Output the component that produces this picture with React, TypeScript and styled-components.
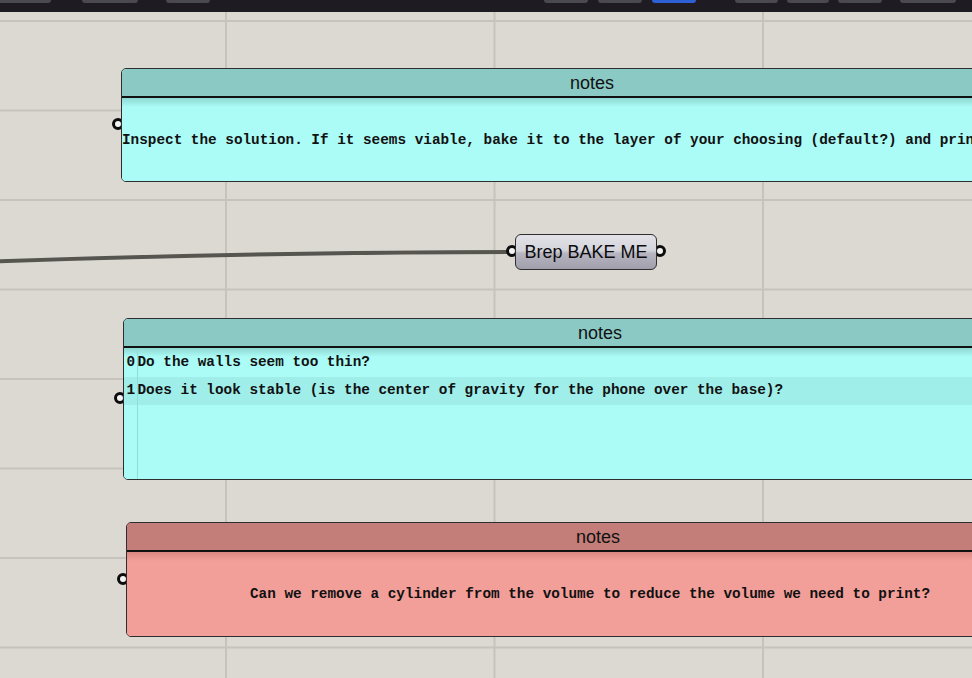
import React from 'react'
import styled, { createGlobalStyle } from 'styled-components'

const GlobalStyle = createGlobalStyle`
  html, body {
    margin: 0;
    padding: 0;
    background: #dcd9d3;
    overflow: hidden;
  }
  #root {
    width: 972px;
    height: 678px;
  }
`

const colors = {
  bar: '#1e1c22',
  barButton: '#4b4950',
  barActive: '#2d5fd5',
  canvas: '#dcd9d3',
  grid: '#c6c2bc',
  wire: '#575550',
  outline: '#2e2e30',
}

const palettes = {
  cyan: { head: '#8bc9c5', body: '#abfbf6', shade: '#8ed8d3', stripe: '#9feeea', rule: '#90dcd7' },
  red: { head: '#c47e7a', body: '#f29f99', shade: '#d9877f', stripe: '#e8958f', rule: '#d8908a' },
}

type Tone = keyof typeof palettes

const Screen = styled.div`
  display: flex;
  flex-direction: column;
  width: 972px;
  height: 678px;
  overflow: hidden;
`

const TopBar = styled.div`
  display: flex;
  align-items: flex-start;
  height: 12px;
  flex: 0 0 12px;
  background: ${colors.bar};
`

const BarGroup = styled.div<{ $offset: number }>`
  display: flex;
  margin-left: ${({ $offset }) => $offset}px;
`

const BarButton = styled.div<{ $w: number; $gap?: number; $active?: boolean }>`
  width: ${({ $w }) => $w}px;
  height: 3px;
  margin-right: ${({ $gap }) => $gap ?? 0}px;
  border-radius: 0 0 6px 6px;
  background: ${({ $active }) => ($active ? colors.barActive : colors.barButton)};
`

const Canvas = styled.div`
  position: relative;
  flex: 1;
  overflow: hidden;
  background-color: ${colors.canvas};
  background-image:
    linear-gradient(to right, ${colors.grid} 2px, transparent 2px),
    linear-gradient(to bottom, ${colors.grid} 2px, transparent 2px);
  background-size: 268.5px 89.5px;
  background-position: 225px 8px;
`

const Wires = styled.svg`
  position: absolute;
  inset: 0;
  width: 100%;
  height: 100%;
  pointer-events: none;
`

const Node = styled.div<{ $x: number; $y: number }>`
  position: absolute;
  left: ${({ $x }) => $x}px;
  top: ${({ $y }) => $y}px;
`

const Grip = styled.span<{ $side: 'left' | 'right' }>`
  position: absolute;
  top: 50%;
  ${({ $side }) => ($side === 'left' ? 'left: -9px;' : 'right: -9px;')}
  width: 6px;
  height: 6px;
  margin-top: -7px;
  border: 3.5px solid #0c0c0c;
  border-radius: 50%;
  background: #f4f4f4;
  z-index: 0;
`

const Panel = styled.div<{ $w: number; $h: number }>`
  position: relative;
  width: ${({ $w }) => $w}px;
  height: ${({ $h }) => $h}px;
`

const PanelFrame = styled.div<{ $tone: Tone }>`
  position: relative;
  z-index: 1;
  display: flex;
  flex-direction: column;
  height: 100%;
  box-sizing: border-box;
  border: 1.5px solid ${colors.outline};
  border-radius: 5px;
  overflow: hidden;
  background: ${({ $tone }) => palettes[$tone].body};
`

const PanelHead = styled.div<{ $tone: Tone }>`
  flex: 0 0 27px;
  display: flex;
  align-items: center;
  justify-content: center;
  background: ${({ $tone }) => palettes[$tone].head};
  border-bottom: 2px solid #111;
  font-family: 'Liberation Sans', Arial, sans-serif;
  font-size: 18px;
  color: #111;
  line-height: 1;
`

const PanelBody = styled.div<{ $tone: Tone; $center?: boolean }>`
  flex: 1;
  display: flex;
  flex-direction: column;
  justify-content: ${({ $center }) => ($center ? 'center' : 'flex-start')};
  align-items: ${({ $center }) => ($center ? 'center' : 'stretch')};
  background: linear-gradient(
    to bottom,
    ${({ $tone }) => palettes[$tone].shade} 0px,
    ${({ $tone }) => palettes[$tone].body} 9px
  );
  font-family: 'Liberation Mono', 'Courier New', monospace;
  font-weight: bold;
  font-size: 14.35px;
  color: #111;
  white-space: nowrap;
`

const NoteText = styled.div<{ $align: 'left' | 'center' }>`
  width: 100%;
  text-align: ${({ $align }) => $align};
  ${({ $align }) => ($align === 'center' ? 'padding-right: 16px; box-sizing: border-box;' : '')}
`

const ListBody = styled.div<{ $tone: Tone }>`
  position: relative;
  flex: 1;
  display: flex;
  flex-direction: column;
  background: linear-gradient(
    to bottom,
    ${({ $tone }) => palettes[$tone].shade} 0px,
    ${({ $tone }) => palettes[$tone].body} 9px
  );
  font-family: 'Liberation Mono', 'Courier New', monospace;
  font-weight: bold;
  font-size: 14.35px;
  color: #111;
  white-space: nowrap;

  &::before {
    content: '';
    position: absolute;
    left: 12.5px;
    top: 0;
    bottom: 0;
    width: 1px;
    background: ${({ $tone }) => palettes[$tone].rule};
  }
`

const ListRow = styled.div<{ $tone: Tone; $odd: boolean }>`
  display: flex;
  align-items: center;
  height: 28.5px;
  padding-bottom: 1px;
  box-sizing: border-box;
  background: ${({ $tone, $odd }) => ($odd ? palettes[$tone].stripe : 'transparent')};
`

const RowIndex = styled.span`
  width: 13.5px;
  padding-left: 2.5px;
  box-sizing: border-box;
  flex: 0 0 13.5px;
`

const Param = styled.div`
  position: relative;
  width: 142px;
  height: 36px;
`

const ParamBox = styled.div`
  position: relative;
  z-index: 1;
  display: flex;
  align-items: center;
  justify-content: center;
  height: 100%;
  box-sizing: border-box;
  padding-top: 1px;
  border: 1.5px solid ${colors.outline};
  border-radius: 6px;
  background: linear-gradient(
    to bottom,
    #e2e2e8 0%,
    #d4d4db 45%,
    #b5b4bf 55%,
    #a09fab 100%
  );
  font-family: 'Liberation Sans', Arial, sans-serif;
  font-size: 18px;
  color: #0c0c0c;
`

const Note = ({
  x,
  y,
  w,
  h,
  tone,
  children,
}: {
  x: number
  y: number
  w: number
  h: number
  tone: Tone
  children: React.ReactNode
}) => (
  <Node $x={x} $y={y}>
    <Panel $w={w} $h={h}>
      <Grip $side="left" />
      <PanelFrame $tone={tone}>
        <PanelHead $tone={tone}>notes</PanelHead>
        {children}
      </PanelFrame>
    </Panel>
  </Node>
)

const questions = [
  'Do the walls seem too thin?',
  'Does it look stable (is the center of gravity for the phone over the base)?',
]

const App = () => {
  return (
    <Screen>
      <GlobalStyle />
      <TopBar>
        <BarGroup $offset={-4}>
          <BarButton $w={55} $gap={31} />
          <BarButton $w={56} $gap={28} />
          <BarButton $w={44} />
        </BarGroup>
        <BarGroup $offset={334}>
          <BarButton $w={44} $gap={10} />
          <BarButton $w={44} $gap={10} />
          <BarButton $w={44} $active />
        </BarGroup>
        <BarGroup $offset={39}>
          <BarButton $w={43} $gap={9} />
          <BarButton $w={42} $gap={9} />
          <BarButton $w={44} />
        </BarGroup>
        <BarGroup $offset={18}>
          <BarButton $w={56} />
        </BarGroup>
      </TopBar>

      <Canvas>
        <Wires viewBox="0 0 972 666">
          <path
            d="M -10 249.5 C 160 244, 340 240, 512 240"
            fill="none"
            stroke={colors.wire}
            strokeWidth={4}
          />
        </Wires>

        <Note x={121} y={56} w={942} h={114} tone="cyan">
          <PanelBody $tone="cyan" $center>
            <NoteText $align="left">
              Inspect the solution. If it seems viable, bake it to the layer of your choosing (default?) and print it.
            </NoteText>
          </PanelBody>
        </Note>

        <Node $x={515} $y={222}>
          <Param>
            <Grip $side="left" />
            <Grip $side="right" />
            <ParamBox>Brep BAKE ME</ParamBox>
          </Param>
        </Node>

        <Note x={123} y={306} w={954} h={162} tone="cyan">
          <ListBody $tone="cyan">
            {questions.map((q, i) => (
              <ListRow key={i} $tone="cyan" $odd={i % 2 === 1}>
                <RowIndex>{i}</RowIndex>
                <span>{q}</span>
              </ListRow>
            ))}
          </ListBody>
        </Note>

        <Note x={126} y={510} w={944} h={115} tone="red">
          <PanelBody $tone="red" $center>
            <NoteText $align="center">
              Can we remove a cylinder from the volume to reduce the volume we need to print?
            </NoteText>
          </PanelBody>
        </Note>
      </Canvas>
    </Screen>
  )
}

export default App
